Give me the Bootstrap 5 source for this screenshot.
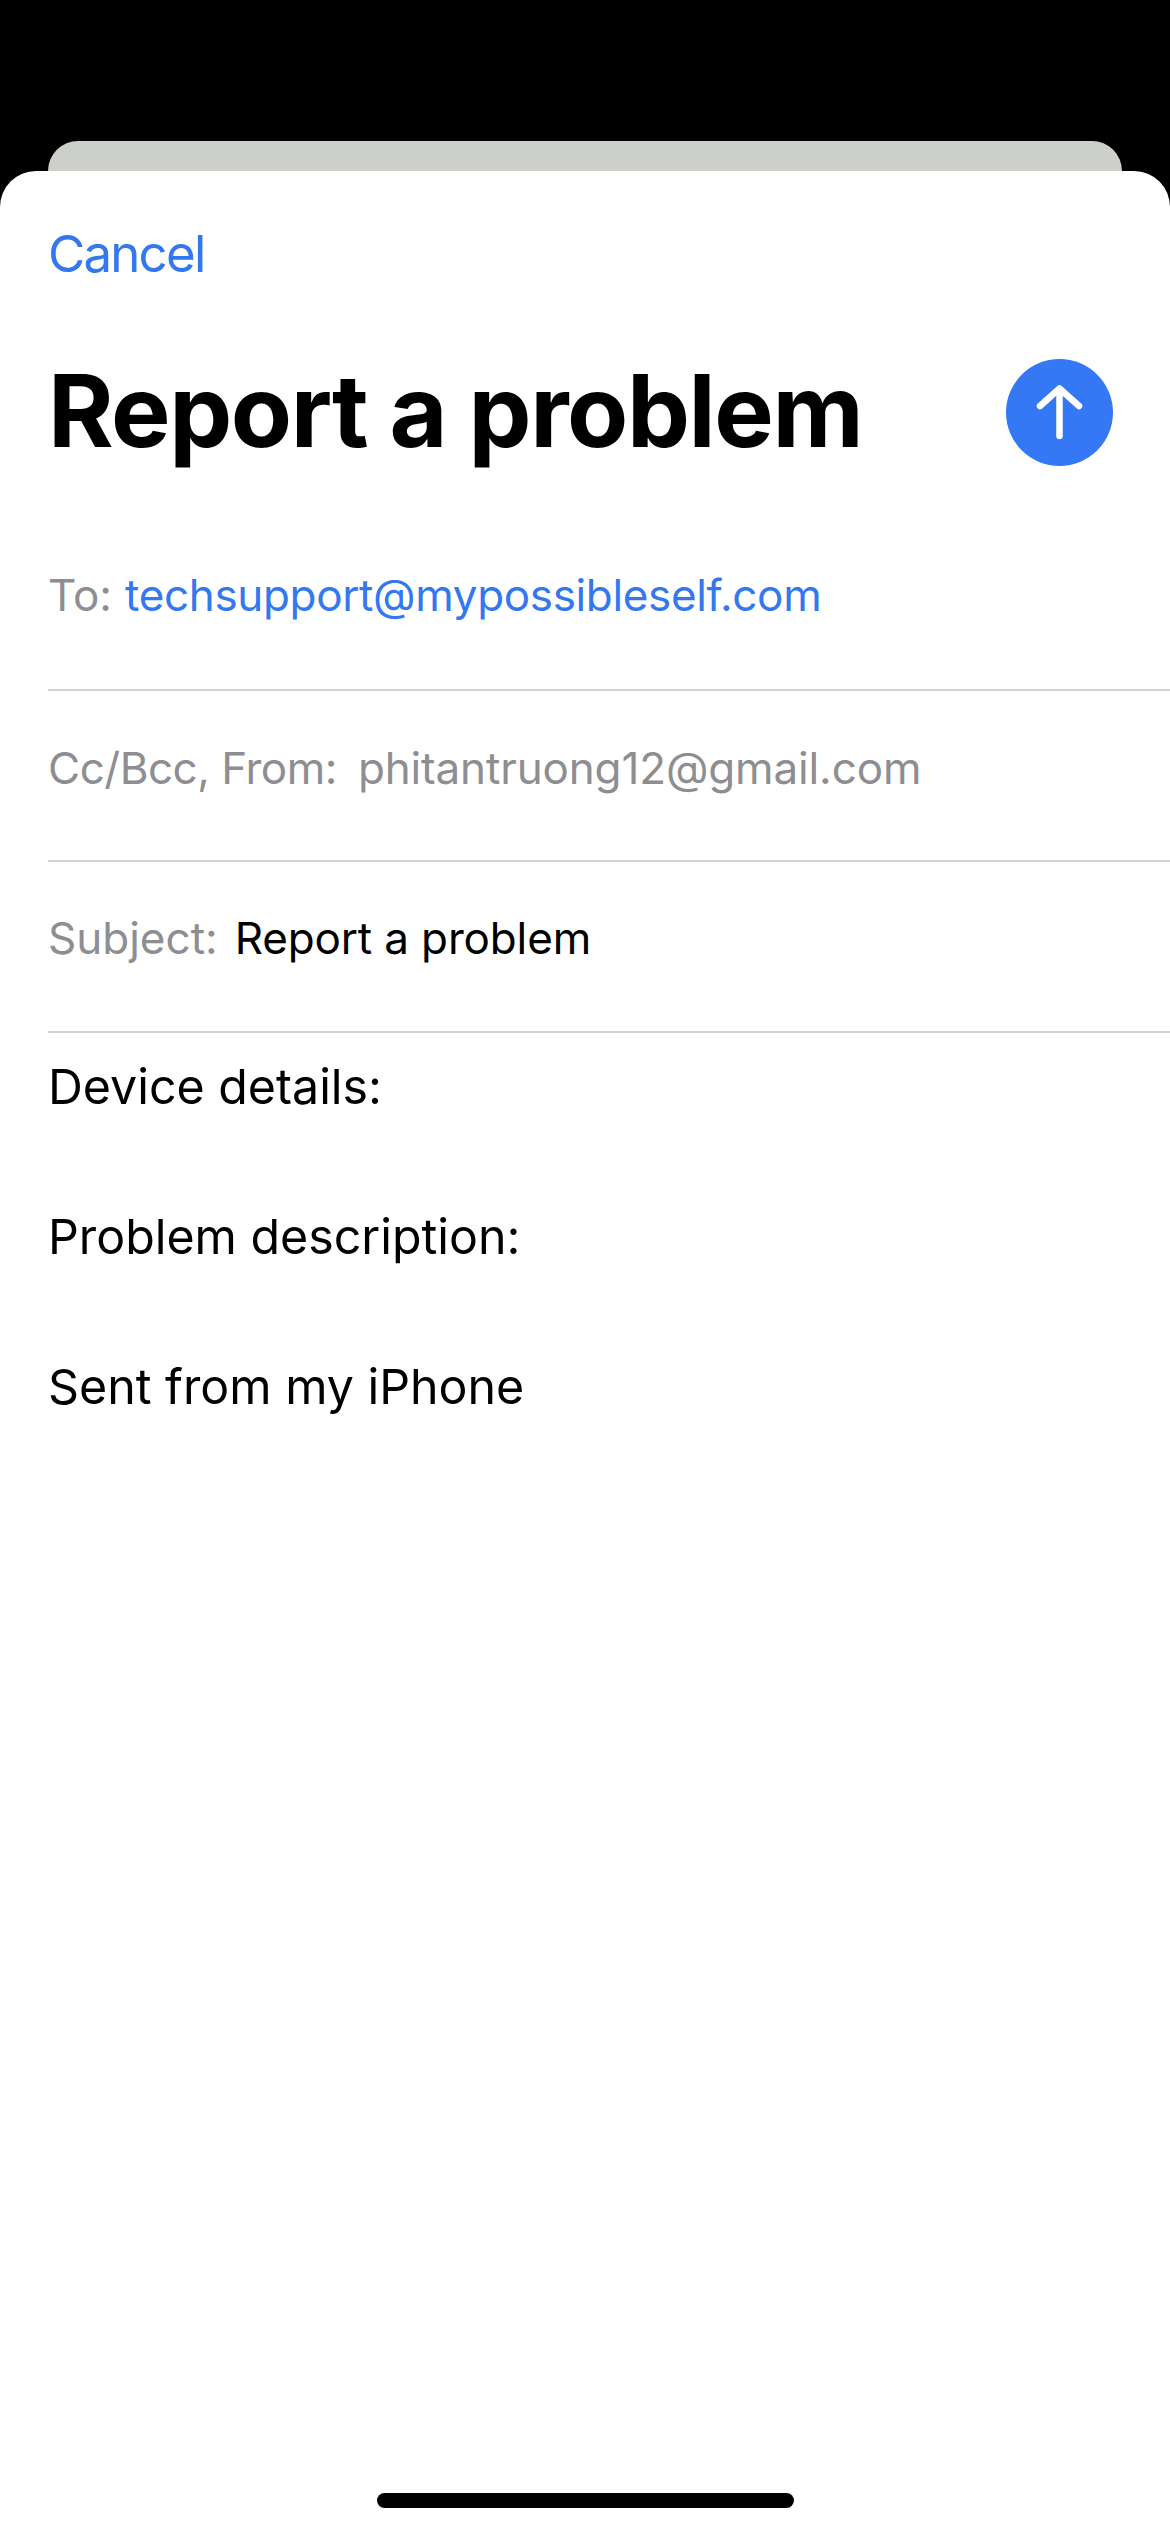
<!DOCTYPE html>
<html lang="en">
<head>
<meta charset="utf-8">
<title>Report a problem</title>
<link href="https://cdn.jsdelivr.net/npm/bootstrap@5.3.0/dist/css/bootstrap.min.css" rel="stylesheet">
<style>
html,body{height:2532px;margin:0;background:#000;overflow:hidden}
body{font-family:Inter,"Liberation Sans",sans-serif;letter-spacing:0}
.shell{height:2532px;padding-top:141px}
.behind{height:30px;margin:0 48px;background:#cdcfcb;border-radius:30px 30px 0 0}
.sheet{height:2361px;background:#fff;border-radius:36px 36px 0 0;padding-left:48px}
.cancel{font-size:51px;line-height:62px;color:#3478f0;padding-top:52px;text-decoration:none;display:block;width:max-content;letter-spacing:-1.8px}
.head{height:255px;padding-right:57px}
.ttl{font-size:100px;font-weight:700;line-height:1;margin:-4px 0 0;color:#000;letter-spacing:-1.4px}
.send{width:107px;height:107px;background:#3478f6;border:0;padding:0;border-radius:50%;flex:none}
.send svg{display:block}
.rowline{border-bottom:2px solid #d3d3d5;height:171px;font-size:44px;color:#8e8e92;padding-bottom:16px}
.rowline.first{height:151px;padding-bottom:39px;column-gap:13px}
.rowline.cc{column-gap:21px;letter-spacing:-.14px}
.rowline.cc .tag:first-child{letter-spacing:-.5px}
.rowline.sub{column-gap:17px;padding-bottom:18px}
.tag{line-height:1}
.val-blue{color:#3478f0;letter-spacing:-.35px}
.val-black{color:#000;letter-spacing:-.15px}
.bodytext{font-size:48.3px;line-height:150px;color:#000;margin-top:-21px}
.homebar{width:417px;height:15px;background:#000;border-radius:8px;position:absolute;left:377px;top:2493px}
</style>
</head>
<body>
<div class="shell d-flex flex-column">
  <div class="behind"></div>
  <div class="sheet">
    <a class="cancel" href="#">Cancel</a>
    <div class="head d-flex align-items-center justify-content-between">
      <h1 class="ttl">Report a problem</h1>
      <button class="send d-flex align-items-center justify-content-center" aria-label="Send">
        <svg width="107" height="107" viewBox="0 0 107 107" fill="none" stroke="#fff" stroke-width="6.5" stroke-linecap="round" stroke-linejoin="round"><path d="M53.5 77V30"/><path d="M34 47L53.5 29.5L73 47"/></svg>
      </button>
    </div>
    <div class="rowline first d-flex align-items-center"><span class="tag">To:</span><span class="tag val-blue">techsupport@mypossibleself.com</span></div>
    <div class="rowline cc d-flex align-items-center"><span class="tag">Cc/Bcc, From:</span><span class="tag">phitantruong12@gmail.com</span></div>
    <div class="rowline sub d-flex align-items-center"><span class="tag">Subject:</span><span class="tag val-black">Report a problem</span></div>
    <div class="bodytext">
      <div>Device details:</div>
      <div>Problem description:</div>
      <div>Sent from my iPhone</div>
    </div>
  </div>
</div>
<div class="homebar"></div>
<script src="https://cdn.jsdelivr.net/npm/bootstrap@5.3.0/dist/js/bootstrap.bundle.min.js"></script>
</body>
</html>
